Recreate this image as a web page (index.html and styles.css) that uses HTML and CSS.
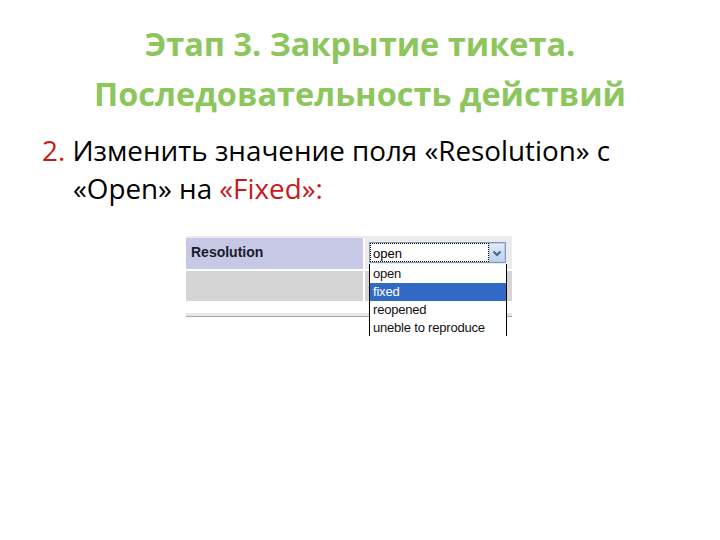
FILE: index.html
```html
<!DOCTYPE html>
<html lang="ru">
<head>
<meta charset="utf-8">
<link rel="stylesheet" href="styles.css">
</head>
<body>
<div class="slide">
  <h1 class="title">Этап 3. Закрытие тикета.<br>Последовательность действий</h1>
  <p class="step"><span class="red">2.</span> Изменить значение поля «Resolution» с<br>«Open» на <span class="red">«Fixed»:</span></p>
  <div class="shot">
    <div class="strip"></div>
    <div class="row row1">
      <div class="label">Resolution</div>
      <div class="cell">
        <div class="select">
          <span class="value">open</span>
          <span class="arrow">
            <svg width="14" height="18" viewBox="0 0 14 18"><path d="M3.5 7.5 L7 11 L10.5 7.5" fill="none" stroke="#4d6185" stroke-width="2"/></svg>
          </span>
        </div>
      </div>
    </div>
    <div class="sep"></div>
    <div class="row row2">
      <div class="label2"></div>
      <div class="cell2"></div>
    </div>
    <div class="gapw"></div>
    <div class="line"></div>
    <ul class="list">
      <li>open</li>
      <li class="sel">fixed</li>
      <li>reopened</li>
      <li>uneble to reproduce</li>
    </ul>
  </div>
</div>
</body>
</html>
```

FILE: styles.css
```css
html, body {
  margin: 0;
  padding: 0;
  background: #ffffff;
}
.slide {
  width: 720px;
  height: 540px;
  overflow: hidden;
  font-family: "Open Sans", Lato, sans-serif;
}
.title {
  margin: 0;
  padding-top: 19px;
  text-align: center;
  font-size: 32.5px;
  line-height: 50px;
  font-weight: bold;
  color: #8cc65c;
  letter-spacing: 0px;
}
.step {
  margin: 12px 0 0 0;
  padding-left: 73px;
  text-indent: -31px;
  font-size: 27.8px;
  line-height: 38px;
  color: #000;
  white-space: nowrap;
}
.red { color: #c81a1a; }
.shot {
  position: relative;
  margin: 29px 0 0 186px;
  width: 326px;
  height: 100px;
  overflow: hidden;
  background: #fff;
  font-family: "Liberation Sans", Arial, sans-serif;
}
.strip { height: 2px; background: #ececec; }
.row { display: flex; }
.row1 { height: 31px; }
.label {
  width: 177px;
  background: #c7c8e6;
  font-weight: bold;
  font-size: 14px;
  color: #1a1a2a;
  padding: 6px 0 0 5px;
  box-sizing: border-box;
}
.cell {
  flex: 1;
  margin-left: 2px;
  background: #ebebeb;
  padding: 4px 0 0 4px;
}
.select {
  width: 137px;
  height: 21px;
  background: #fff;
  border: 1px solid #7f9db9;
  display: flex;
  box-sizing: border-box;
}
.value {
  flex: 1;
  border: 1px dotted #000;
  font-size: 13px;
  line-height: 19px;
  padding-left: 2px;
  color: #000;
}
.arrow {
  width: 16px;
  background: linear-gradient(#e1ecfc, #b9d1f4);
  border: 1px solid #b8c9e6;
  box-sizing: border-box;
  display: flex;
  align-items: center;
  justify-content: center;
}
.sep { height: 2px; background: #fff; }
.row2 { height: 30px; }
.label2 { width: 177px; background: #d5d5d5; }
.cell2 { flex: 1; margin-left: 2px; background: #d5d5d5; }
.gapw { height: 12px; }
.line {
  height: 3px;
  background: #e6e6e6;
  border-bottom: 1px solid #a8a8a8;
}
.list {
  position: absolute;
  left: 183px;
  top: 28px;
  width: 138px;
  margin: 0;
  padding: 1px 0 0 0;
  list-style: none;
  background: #fff;
  border-left: 1px solid #000;
  border-right: 1px solid #000;
  box-sizing: border-box;
  font-size: 13px;
  color: #111;
}
.list li {
  height: 18px;
  line-height: 18px;
  padding-left: 3px;
  letter-spacing: -0.2px;
}
.list li.sel {
  background: #316ac5;
  color: #fff;
}
```
